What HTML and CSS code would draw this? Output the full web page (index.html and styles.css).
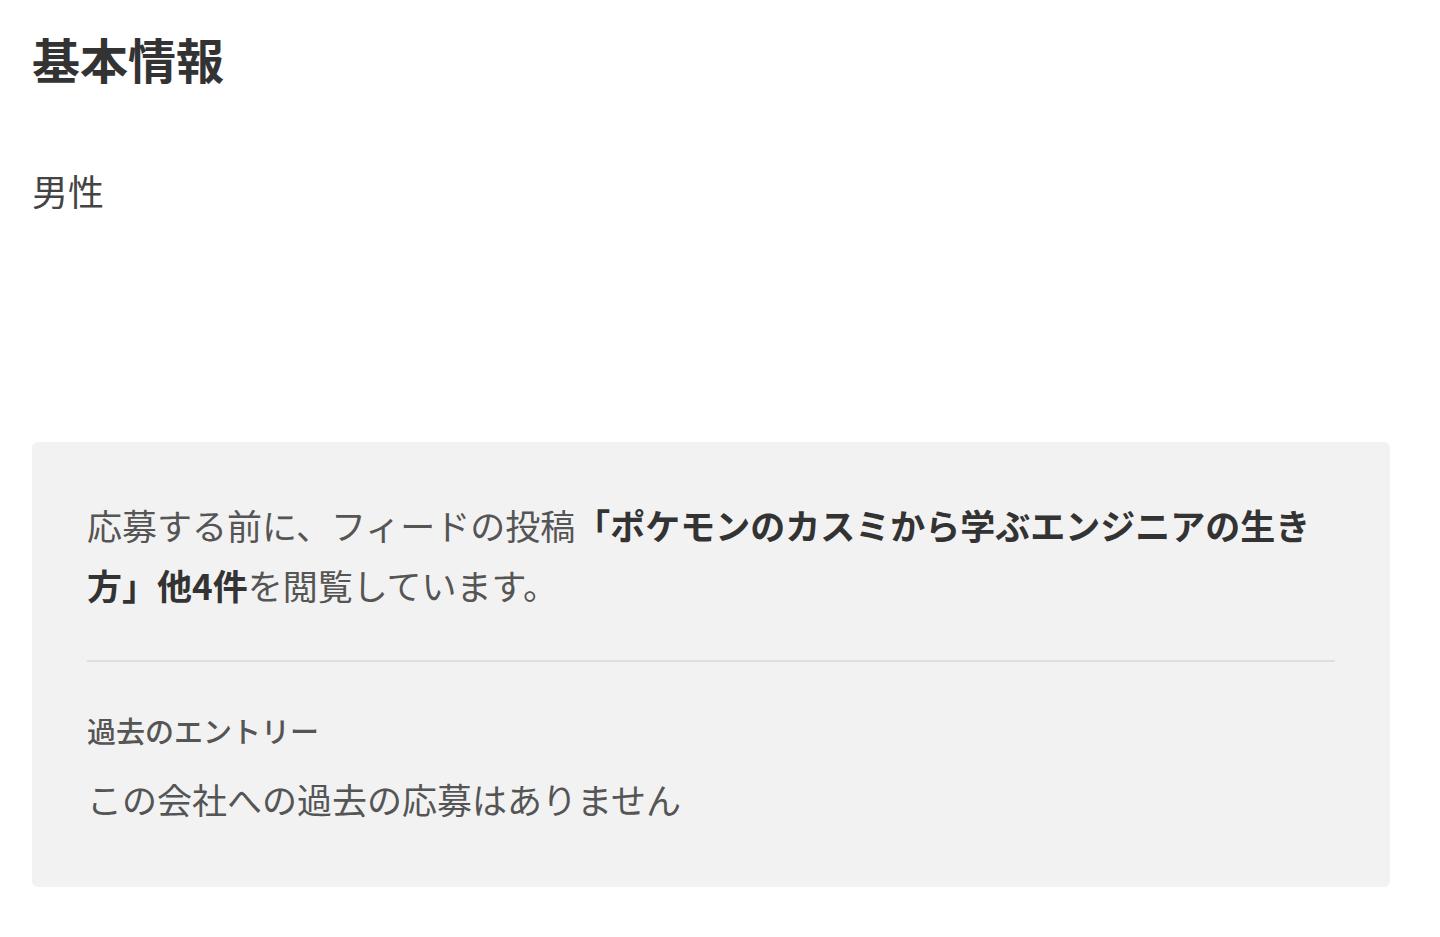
FILE: index.html
```html
<!DOCTYPE html>
<html lang="ja">
<head>
    <meta charset="UTF-8">
    <meta name="viewport" content="width=device-width, initial-scale=1.0">
    <title>基本情報</title>
    <link rel="stylesheet" href="styles.css">
</head>
<body>

    <div class="container">
        <h2 class="section-title">基本情報</h2>

        <p class="gender">男性</p>

        <!-- Activity summary -->
        <div class="activity-box">
            <p class="activity-text">応募する前に、フィードの投稿<strong>「ポケモンのカスミから学ぶエンジニアの生き方」他4件</strong>を閲覧しています。</p>

            <hr class="divider">

            <h3 class="entry-title">過去のエントリー</h3>
            <p class="entry-text">この会社への過去の応募はありません</p>
        </div>
    </div>

</body>
</html>
```

FILE: styles.css
```css
body {
    font-family: "Noto Sans CJK JP", "Noto Sans", sans-serif;
    margin: 0;
    background-color: #fff;
    color: #555;
}

.container {
    padding: 22px 50px 40px 32px;
}

.section-title {
    font-size: 48px;
    line-height: 72px;
    font-weight: 700;
    color: #333;
    margin: 0;
}

.gender {
    font-size: 36px;
    line-height: 54px;
    color: #444;
    margin: 69px 0 0;
}

.activity-box {
    background-color: #f2f2f2;
    border-radius: 6px;
    margin-top: 225px;
    padding: 53px 55px 61px;
}

.activity-text {
    font-size: 35px;
    line-height: 60px;
    margin: 0;
}

.activity-text strong {
    color: #333;
    font-weight: 700;
}

.divider {
    border: none;
    border-top: 2px solid #dedede;
    margin: 45px 0 0;
}

.entry-title {
    font-size: 29px;
    line-height: 44px;
    font-weight: 500;
    color: #555;
    margin: 46px 0 0;
}

.entry-text {
    font-size: 35px;
    line-height: 54px;
    margin: 20px 0 0;
}
```
